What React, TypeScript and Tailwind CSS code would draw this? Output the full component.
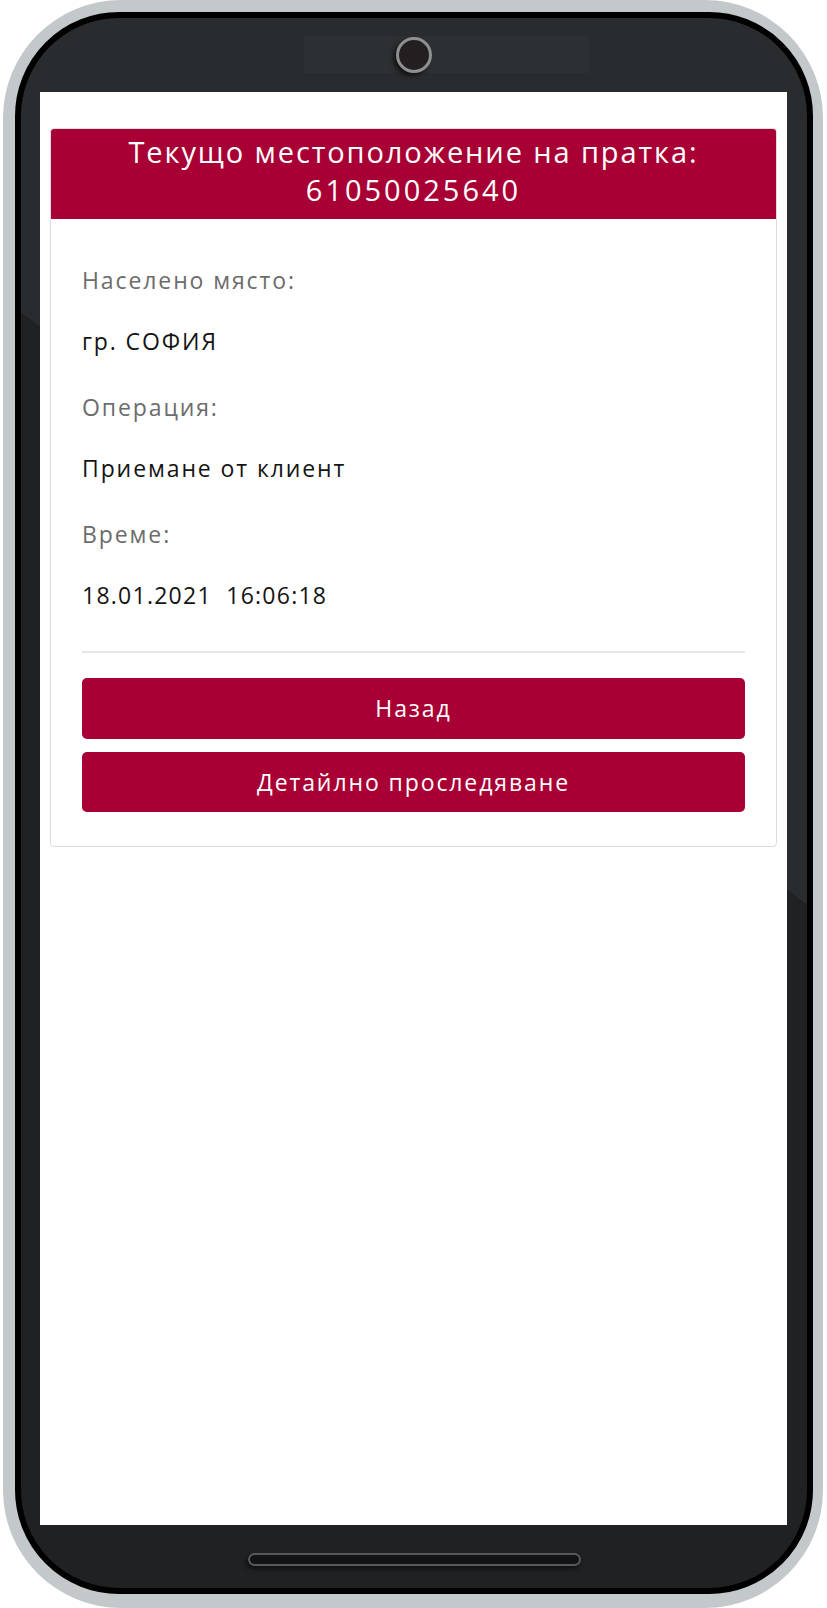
import React from "react";

const font = { fontFamily: '"Open Sans", "Noto Sans", sans-serif' };

const rows = [
  { label: "Населено място:", value: "гр. СОФИЯ", track: "tracking-[1.9px]" },
  { label: "Операция:", value: "Приемане от клиент", track: "tracking-[1.9px]" },
  { label: "Време:", value: "18.01.2021\u00a0\u00a016:06:18", track: "tracking-[1.25px]" },
];

function Camera() {
  return (
    <div className="flex h-[37px] w-[285px] items-center bg-[#2d3032]">
      <div className="ml-[92px] h-[36px] w-[36px] rounded-full border-[3px] border-[#8e8f90] bg-[#231f20] shadow-[-3px_3px_4px_rgba(0,0,0,0.6)]" />
    </div>
  );
}

function TrackingCard() {
  return (
    <div className="mx-[10px] mt-[36px] overflow-hidden rounded-[4px] border border-[#dcdcdc] bg-white">
      <div className="bg-[#a80034] px-2 pt-[4px] pb-[10px] text-center text-[29px] leading-[38px] text-white">
        <div className="tracking-[1.9px]">Текущо местоположение на пратка:</div>
        <div className="tracking-[3px]">61050025640</div>
      </div>
      <div className="px-[31px] pt-[45px] pb-[34px]">
        {rows.map((row, i) => (
          <div key={row.label} className={i > 0 ? "mt-[34px]" : ""}>
            <p className="text-[23px] leading-[32px] tracking-[1.9px] text-[#6c6c6c]">{row.label}</p>
            <p className={`mt-[29px] text-[23px] leading-[32px] text-[#141414] ${row.track}`}>{row.value}</p>
          </div>
        ))}
        <div className="mt-[40px] h-[2px] bg-[#e6e6e6]" />
        <button className="mt-[25px] flex h-[61px] w-full items-center justify-center rounded-[5px] bg-[#a80034] text-[23px] tracking-[1.9px] text-white">
          Назад
        </button>
        <button className="mt-[13px] flex h-[60px] w-full items-center justify-center rounded-[5px] bg-[#a80034] text-[23px] tracking-[1.9px] text-white">
          Детайлно проследяване
        </button>
      </div>
    </div>
  );
}

export default function App() {
  return (
    <div className="h-[1608px] w-[827px] bg-white" style={font}>
      <div className="ml-[3px] h-[1608px] w-[820px] rounded-[118px] bg-[#c3c8cb] pt-[12px] pr-[10px] pb-[14px] pl-[12px]">
        <div className="flex h-full flex-col rounded-[104px] border-[6px] border-black bg-[linear-gradient(217deg,#292c2e_41%,#1f2123_41%)]">
          <div className="flex h-[74px] shrink-0 items-start pt-[18px] pl-[283px]">
            <Camera />
          </div>
          <div className="ml-[19px] mr-[20px] flex-1 bg-white">
            <TrackingCard />
          </div>
          <div className="flex h-[63px] shrink-0 justify-center pt-[28px] pl-[1px]">
            <div className="h-[13px] w-[333px] rounded-full border-[2px] border-[#55595b] bg-[#111315] shadow-[-2px_3px_4px_rgba(0,0,0,0.5)]" />
          </div>
        </div>
      </div>
    </div>
  );
}
